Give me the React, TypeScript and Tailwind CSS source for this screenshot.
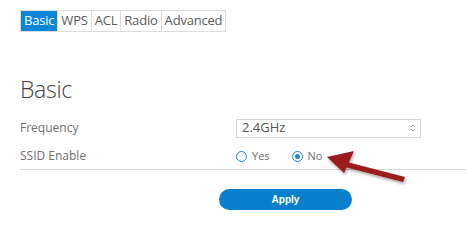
import React from "react";

export default function App() {
  const tabs = ["Basic", "WPS", "ACL", "Radio", "Advanced"];
  return (
    <div className="relative w-[466px] h-[236px] bg-white overflow-hidden text-[#555] font-['Open_Sans',sans-serif]">
      <div className="pl-[20px] pt-[10px]">
        <div className="flex h-[22px] w-fit border border-[#dcdcdc]">
          {tabs.map((t, i) => (
            <div
              key={t}
              className={
                i === 0
                  ? "flex items-center px-[3px] bg-[#0b86d6] text-white text-[13px] tracking-[-0.2px]"
                  : "flex items-center px-[3px] border-l border-[#dcdcdc] text-[#5a5a5a] text-[13px] tracking-[-0.2px]"
              }
            >
              {t}
            </div>
          ))}
        </div>
        <div className="mt-[43px] text-[23px] leading-[28px] font-light text-[#444] tracking-[-0.3px]">Basic</div>
        <div className="mt-[15px] grid grid-cols-[216px_185px] items-center gap-y-[9px] text-[12px] text-[#707070]">
          <div className="leading-[20px]">Frequency</div>
          <div className="h-[19px] border border-[#d6d6d6] flex items-center justify-between pl-[5px] pr-[4px] text-[13px] text-[#555]">
            <span>2.4GHz</span>
            <svg width="6" height="10" viewBox="0 0 6 10" fill="none" stroke="#aaa" strokeWidth="1">
              <path d="M1 4 L3 2 L5 4" />
              <path d="M1 6 L3 8 L5 6" />
            </svg>
          </div>
          <div className="leading-[18px]">SSID Enable</div>
          <div className="flex items-center text-[11px] text-[#707070]">
            <span className="w-[11px] h-[11px] rounded-full border-[1.5px] border-[#1a8ad4] mr-[5px]" />
            <span className="mr-[22px]">Yes</span>
            <span className="w-[11px] h-[11px] rounded-full border-[1.5px] border-[#1a8ad4] mr-[5px] flex items-center justify-center">
              <span className="w-[5px] h-[5px] rounded-full bg-[#1a8ad4]" />
            </span>
            <span>No</span>
          </div>
        </div>
        <div className="mt-[4px] h-px bg-[#d9d9d9]" />
        <div className="mt-[19px] pl-[199px]">
          <button className="w-[133px] h-[21px] rounded-full bg-[#0a7fcd] text-white text-[10px] font-bold flex items-center justify-center font-['Liberation_Sans',sans-serif]">
            Apply
          </button>
        </div>
      </div>
      <svg className="absolute left-0 top-0" width="466" height="236" viewBox="0 0 466 236">
        <defs>
          <filter id="sh" x="-20%" y="-20%" width="140%" height="140%">
            <feDropShadow dx="1" dy="2" stdDeviation="1.5" floodColor="#000" floodOpacity="0.35" />
          </filter>
        </defs>
        <g filter="url(#sh)" fill="#9a1a1c">
          <path d="M405 177 L343 161 L341 166 L403 182 Z" />
          <path d="M327 157 L354 151 L344 173 Z" />
        </g>
      </svg>
    </div>
  );
}
